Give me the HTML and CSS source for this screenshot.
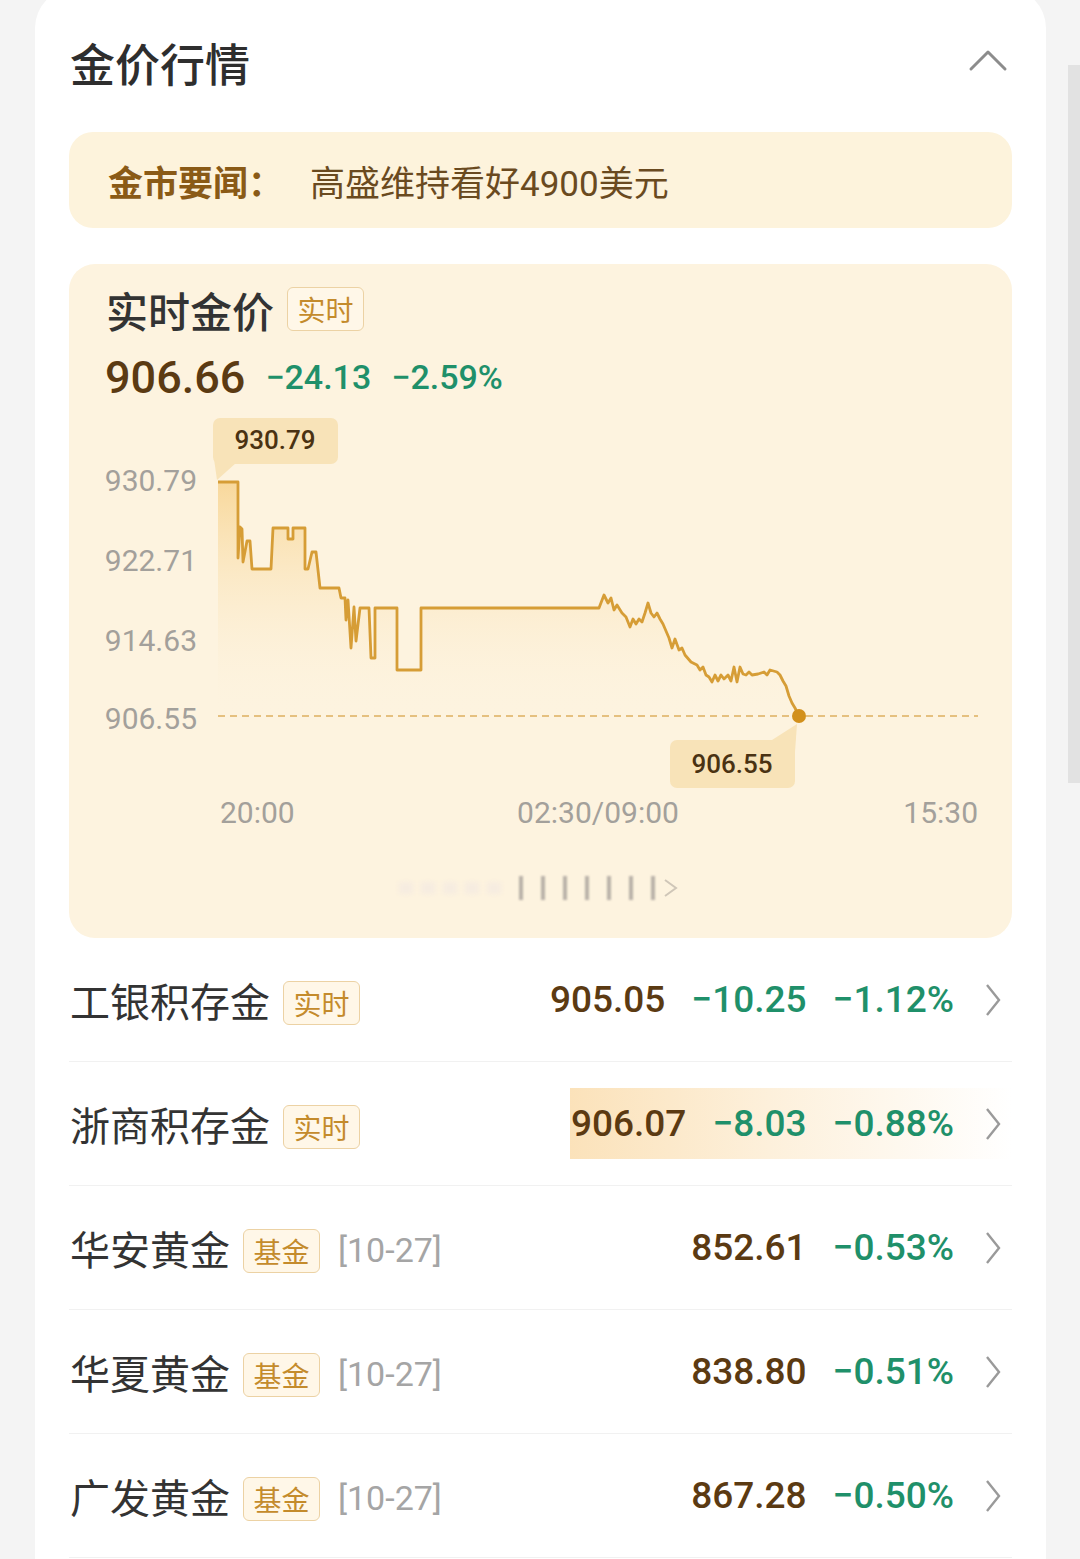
FILE: index.html
```html
<!DOCTYPE html>
<html lang="zh-CN">
<head>
  <meta charset="UTF-8" />
  <title>金价行情</title>
  <meta name="viewport" content="width=device-width, initial-scale=1.0" />
  <link rel="stylesheet" href="styles.css">
</head>
<body>

  <div class="scroll-thumb"></div>

  <section class="card">
    <header class="card-head">
      <h1>金价行情</h1>
      <svg class="fold" width="40" height="24" viewBox="0 0 40 24">
        <path d="M3 21 L20 4 L37 21" fill="none" stroke="#8c8c8c" stroke-width="3" stroke-linecap="round" stroke-linejoin="round"/>
      </svg>
    </header>

    <div class="news">
      <span class="news-label">金市要闻：</span>
      <span class="news-text">高盛维持看好4900美元</span>
    </div>

    <div class="live">
      <div class="live-title">
        <span>实时金价</span>
        <span class="tag">实时</span>
      </div>
      <div class="live-price">
        <span class="price">906.66</span>
        <span class="down">−24.13</span>
        <span class="down">−2.59%</span>
      </div>

      <svg class="chart" width="943" height="440" viewBox="69 410 943 440">
        <defs>
          <linearGradient id="fill" x1="0" y1="0" x2="0" y2="1">
            <stop offset="0" stop-color="#f5c66e" stop-opacity="0.6"/>
            <stop offset="1" stop-color="#fdf3df" stop-opacity="0"/>
          </linearGradient>
        </defs>

        <g class="axis">
          <text x="197" y="491" text-anchor="end">930.79</text>
          <text x="197" y="571" text-anchor="end">922.71</text>
          <text x="197" y="651" text-anchor="end">914.63</text>
          <text x="197" y="729" text-anchor="end">906.55</text>
          <text x="220" y="823">20:00</text>
          <text x="598" y="823" text-anchor="middle">02:30/09:00</text>
          <text x="978" y="823" text-anchor="end">15:30</text>
        </g>

        <path fill="url(#fill)" d="M218,482 H238 V558 L240,527 L242,529 L243,562 L247,541 L250,541 L252,569 H271 L273,528 H288 V539 H293 V528 H305 V569 H308 L312,552 L316,552 L320,588 H339 L341,598 H345 L346,620 L348,600 L351,648 L354,607 L356,641 L360,608 H369 L371,658 H375 V608 H397 V670 H421 V608 H599 L604,595 L608,603 L611,598 L614,610 L617,605 L622,613 L626,617 L630,627 L633,619 L636,624 L639,619 L642,622 L645,613 L648,603 L651,613 L654,617 L657,613 L660,619 L663,624 L666,631 L669,638 L672,648 L675,639 L679,650 L682,648 L685,655 L691,662 L697,665 L700,670 L703,667 L706,675 L709,677 L712,682 L715,675 L718,681 L721,675 L724,679 L728,675 L731,681 L734,667 L737,682 L740,667 L743,674 L746,675 L749,672 L752,675 L758,674 L764,672 L767,675 L770,670 L777,672 L780,675 L783,681 L786,686 L789,696 L792,703 L795,708 L799,716 L218,716 Z"/>

        <line x1="218" y1="716" x2="978" y2="716" stroke="#ddb060" stroke-width="1.6" stroke-dasharray="7 5"/>

        <path fill="none" stroke="#d69d36" stroke-width="2.8" stroke-linejoin="round" d="M218,482 H238 V558 L240,527 L242,529 L243,562 L247,541 L250,541 L252,569 H271 L273,528 H288 V539 H293 V528 H305 V569 H308 L312,552 L316,552 L320,588 H339 L341,598 H345 L346,620 L348,600 L351,648 L354,607 L356,641 L360,608 H369 L371,658 H375 V608 H397 V670 H421 V608 H599 L604,595 L608,603 L611,598 L614,610 L617,605 L622,613 L626,617 L630,627 L633,619 L636,624 L639,619 L642,622 L645,613 L648,603 L651,613 L654,617 L657,613 L660,619 L663,624 L666,631 L669,638 L672,648 L675,639 L679,650 L682,648 L685,655 L691,662 L697,665 L700,670 L703,667 L706,675 L709,677 L712,682 L715,675 L718,681 L721,675 L724,679 L728,675 L731,681 L734,667 L737,682 L740,667 L743,674 L746,675 L749,672 L752,675 L758,674 L764,672 L767,675 L770,670 L777,672 L780,675 L783,681 L786,686 L789,696 L792,703 L795,708 L799,716"/>

        <circle cx="799" cy="716" r="7" fill="#d2901c"/>

        <g class="tip">
          <polygon points="213,452 236,463 217,480" fill="#f8e3b8"/>
          <rect x="213" y="418" width="125" height="46" rx="7" fill="#f8e3b8"/>
          <text x="275" y="449" text-anchor="middle">930.79</text>
        </g>
        <g class="tip">
          <polygon points="795,752 772,740 797,724" fill="#f8e3b8"/>
          <rect x="670" y="740" width="125" height="48" rx="7" fill="#f8e3b8"/>
          <text x="732" y="773" text-anchor="middle">906.55</text>
        </g>
      </svg>

      <div class="swipe">
        <span class="faint"></span><span class="faint"></span><span class="faint"></span>
        <span class="faint"></span><span class="faint"></span>
        <span class="bar"></span><span class="bar"></span><span class="bar"></span>
        <span class="bar"></span><span class="bar"></span><span class="bar"></span><span class="bar"></span>
        <svg width="16" height="22" viewBox="0 0 16 22"><path d="M2 3 L13 11 L2 19" fill="none" stroke="#cfc6b8" stroke-width="2"/></svg>
      </div>
    </div>

    <ul class="quotes">
      <li class="row">
        <div class="name">工银积存金<span class="tag">实时</span></div>
        <div class="right">
          <span class="price">905.05</span>
          <span class="down">−10.25</span>
          <span class="down">−1.12%</span>
          <svg class="arrow" width="18" height="34" viewBox="0 0 18 34"><path d="M3 2 L15 17 L3 32" fill="none" stroke="#9a9a9a" stroke-width="2.4"/></svg>
        </div>
      </li>
      <li class="row">
        <div class="name">浙商积存金<span class="tag">实时</span></div>
        <div class="right flash">
          <span class="price">906.07</span>
          <span class="down">−8.03</span>
          <span class="down">−0.88%</span>
          <svg class="arrow" width="18" height="34" viewBox="0 0 18 34"><path d="M3 2 L15 17 L3 32" fill="none" stroke="#9a9a9a" stroke-width="2.4"/></svg>
        </div>
      </li>
      <li class="row">
        <div class="name">华安黄金<span class="tag">基金</span><span class="date">[10-27]</span></div>
        <div class="right">
          <span class="price">852.61</span>
          <span class="down">−0.53%</span>
          <svg class="arrow" width="18" height="34" viewBox="0 0 18 34"><path d="M3 2 L15 17 L3 32" fill="none" stroke="#9a9a9a" stroke-width="2.4"/></svg>
        </div>
      </li>
      <li class="row">
        <div class="name">华夏黄金<span class="tag">基金</span><span class="date">[10-27]</span></div>
        <div class="right">
          <span class="price">838.80</span>
          <span class="down">−0.51%</span>
          <svg class="arrow" width="18" height="34" viewBox="0 0 18 34"><path d="M3 2 L15 17 L3 32" fill="none" stroke="#9a9a9a" stroke-width="2.4"/></svg>
        </div>
      </li>
      <li class="row">
        <div class="name">广发黄金<span class="tag">基金</span><span class="date">[10-27]</span></div>
        <div class="right">
          <span class="price">867.28</span>
          <span class="down">−0.50%</span>
          <svg class="arrow" width="18" height="34" viewBox="0 0 18 34"><path d="M3 2 L15 17 L3 32" fill="none" stroke="#9a9a9a" stroke-width="2.4"/></svg>
        </div>
      </li>
    </ul>
  </section>

</body>
</html>
```

FILE: styles.css
```css
* { margin: 0; padding: 0; box-sizing: border-box; }
html, body { height: 100%; overflow: hidden; }
body {
  background: #f4f4f4; color: #333;
  font-family: Roboto, "Noto Sans CJK SC", sans-serif;
}

.scroll-thumb {
  position: absolute; top: 65px; right: 0; width: 12px; height: 718px;
  background: #e2e2e2;
}

.card {
  margin: -12px 0 0 35px; width: 1011px; min-height: 1600px;
  padding: 12px 34px 0; background: #fff; border-radius: 40px 40px 0 0;
}

.card-head {
  height: 132px; display: flex; justify-content: space-between; align-items: center;
  padding: 0 2px 8px 1px;
}
.card-head h1 { font-size: 45px; font-weight: 500; color: #2e2e2e; }
.fold { margin: 0 2px 4px 0; }

.news {
  height: 96px; display: flex; align-items: center; padding-left: 39px;
  background: #fdf3dc; border-radius: 24px; font-size: 35px;
}
.news-label { font-weight: 700; color: #8a5a16; width: 202px; }
.news-text { color: #6a4a1f; }

.live {
  margin-top: 36px; padding: 23px 0 38px; background: #fdf3df; border-radius: 26px;
}
.live-title {
  display: flex; align-items: center; gap: 13px; padding-left: 37px;
  font-size: 42px; font-weight: 500; color: #333; height: 44px;
}
.live-price {
  display: flex; align-items: center; gap: 20px; padding-left: 36px;
  margin-top: 20px; height: 52px;
}
.live-price .price { font-size: 45px; font-weight: 500; color: #5b3a12; }
.live-price .down { font-size: 34px; }

.tag {
  display: inline-flex; align-items: center; justify-content: center;
  width: 77px; height: 44px; border: 1.5px solid #ecd2a4; border-radius: 6px;
  background: #fff7e8; color: #c48b2c; font-size: 28px; font-weight: 400;
}

.price { color: #5b3a12; font-weight: 500; }
.down { color: #1f906a; font-weight: 500; }

.chart { display: block; margin-top: 7px; }
.axis text { font-size: 30px; fill: #a3a09b; font-family: Roboto, sans-serif; }
.tip text { font-size: 26px; fill: #4a3212; font-weight: 500; font-family: Roboto, sans-serif; }

.swipe {
  margin: 26px 0 0 330px; height: 24px; display: flex; align-items: center; gap: 8px;
}
.swipe .faint { width: 14px; height: 12px; background: #f6ece0; border-radius: 2px; filter: blur(2px); }
.swipe .bar { width: 4px; height: 24px; background: #b9b2a8; filter: blur(1.2px); margin-left: 10px; }
.swipe svg { filter: blur(0.6px); }

.quotes { list-style: none; }
.row {
  height: 124px; display: flex; align-items: center; justify-content: space-between;
  border-bottom: 1.5px solid #f1f1f1;
}
.name { display: flex; align-items: center; gap: 13px; font-size: 40px; color: #333; padding-left: 1px; }
.name .tag { margin-top: 6px; }
.date { color: #a5a5a5; font-size: 34px; margin-left: 5px; margin-top: 4px; }

.right {
  display: flex; align-items: center; gap: 26px; height: 71px; padding-right: 10px;
  font-size: 37px;
}
.right .arrow { margin-left: 4px; }
.flash {
  padding-left: 1px;
  background: linear-gradient(90deg, #fbe2ba 0%, #fdf0db 45%, rgba(255, 255, 255, 0) 100%);
}
```
